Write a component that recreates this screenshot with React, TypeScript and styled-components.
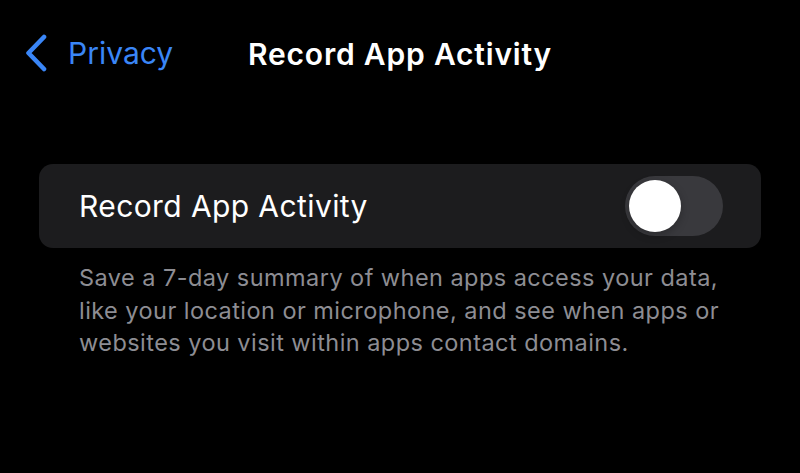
import React, { useState } from "react";
import styled, { createGlobalStyle } from "styled-components";

const Global = createGlobalStyle`
  html, body { margin: 0; padding: 0; background: #000; }
  body { font-family: Inter, "Noto Sans", sans-serif; -webkit-font-smoothing: antialiased; }
`;

const Screen = styled.div`
  width: 800px;
  height: 473px;
  background: #000;
  overflow: hidden;
  display: flex;
  flex-direction: column;
`;

const NavBar = styled.header`
  position: relative;
  height: 108px;
  display: flex;
  justify-content: center;
  box-sizing: border-box;
`;

const BackButton = styled.button`
  position: absolute;
  left: 24px;
  top: 34px;
  display: flex;
  align-items: center;
  gap: 19px;
  background: none;
  border: 0;
  padding: 0;
  color: #3a86f7;
  font-family: inherit;
  font-size: 30px;
  font-weight: 400;
  letter-spacing: 0;
  cursor: pointer;
`;

const Title = styled.h1`
  margin: 0;
  padding-top: 36px;
  font-size: 30px;
  font-weight: 600;
  color: #fff;
  letter-spacing: 0.8px;
`;

const Content = styled.main`
  padding: 56px 39px 0;
  display: flex;
  flex-direction: column;
`;

const Card = styled.section`
  background: #1c1c1e;
  border-radius: 14px;
  height: 84px;
  display: flex;
  align-items: center;
  justify-content: space-between;
  padding: 0 38px 0 40px;
`;

const RowLabel = styled.span`
  color: #fff;
  font-size: 30px;
  font-weight: 400;
  letter-spacing: 0.4px;
`;

const Track = styled.button<{ $on: boolean }>`
  width: 98px;
  height: 60px;
  border-radius: 30px;
  border: 0;
  padding: 0 4px;
  display: flex;
  align-items: center;
  justify-content: ${(p) => (p.$on ? "flex-end" : "flex-start")};
  background: ${(p) => (p.$on ? "#34c759" : "#39393d")};
  cursor: pointer;
`;

const Knob = styled.span`
  width: 52px;
  height: 52px;
  border-radius: 50%;
  background: #fff;
  box-shadow: 0 3px 8px rgba(0, 0, 0, 0.25);
`;

const Footer = styled.p`
  margin: 14px 0 0;
  padding: 0 40px;
  color: #8d8d93;
  font-size: 23.5px;
  line-height: 32.5px;
  letter-spacing: 0.45px;
`;

export default function App() {
  const [on, setOn] = useState(false);
  return (
    <Screen>
      <Global />
      <NavBar>
        <BackButton>
          <svg width="25" height="38" viewBox="0 0 25 38" fill="none">
            <path d="M20 3 L4.5 19 L20 35" stroke="#3a86f7" strokeWidth="4.6" strokeLinecap="round" strokeLinejoin="round" />
          </svg>
          Privacy
        </BackButton>
        <Title>Record App Activity</Title>
      </NavBar>
      <Content>
        <Card>
          <RowLabel>Record App Activity</RowLabel>
          <Track $on={on} onClick={() => setOn(!on)} aria-label="Record App Activity">
            <Knob />
          </Track>
        </Card>
        <Footer>
          Save a 7-day summary of when apps access your data, like your location or microphone, and see when apps or websites you visit within apps contact domains.
        </Footer>
      </Content>
    </Screen>
  );
}
